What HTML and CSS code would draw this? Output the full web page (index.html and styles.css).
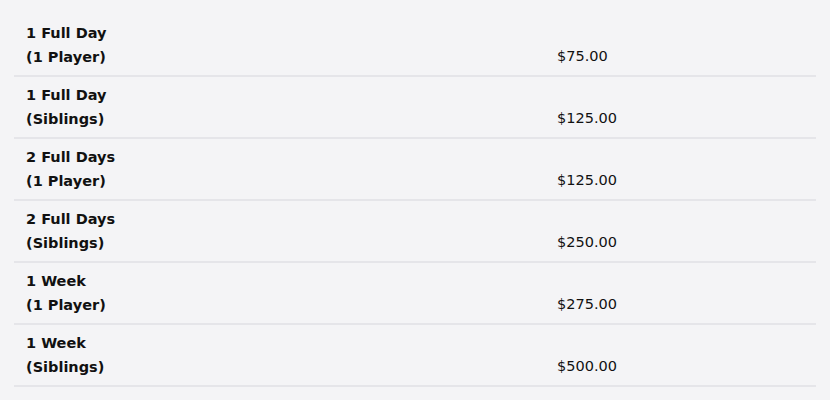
FILE: index.html
```html
<!DOCTYPE html>
<html>
<head>
<meta charset="utf-8">
<link rel="stylesheet" href="styles.css">
</head>
<body>
<div class="prices">
  <div class="row"><div class="label">1 Full Day<br>(1 Player)</div><div class="price">$75.00</div></div>
  <div class="row"><div class="label">1 Full Day<br>(Siblings)</div><div class="price">$125.00</div></div>
  <div class="row"><div class="label">2 Full Days<br>(1 Player)</div><div class="price">$125.00</div></div>
  <div class="row"><div class="label">2 Full Days<br>(Siblings)</div><div class="price">$250.00</div></div>
  <div class="row"><div class="label">1 Week<br>(1 Player)</div><div class="price">$275.00</div></div>
  <div class="row"><div class="label">1 Week<br>(Siblings)</div><div class="price">$500.00</div></div>
</div>
</body>
</html>
```
FILE: styles.css
```css
html, body {
  margin: 0;
  background: #f4f4f6;
}
body {
  padding: 14px;
  font-family: "DejaVu Sans", Verdana, sans-serif;
  font-size: 14.5px;
  color: #111;
}
.prices {
  display: flex;
  flex-direction: column;
  padding-top: 1px;
}
.row {
  display: grid;
  grid-template-columns: 531px 1fr;
  border-bottom: 2px solid #e5e5e9;
}
.label {
  font-weight: bold;
  line-height: 24px;
  padding: 6px 12px;
}
.price {
  align-self: end;
  line-height: 24px;
  padding: 6px 12px 7px;
}
```
